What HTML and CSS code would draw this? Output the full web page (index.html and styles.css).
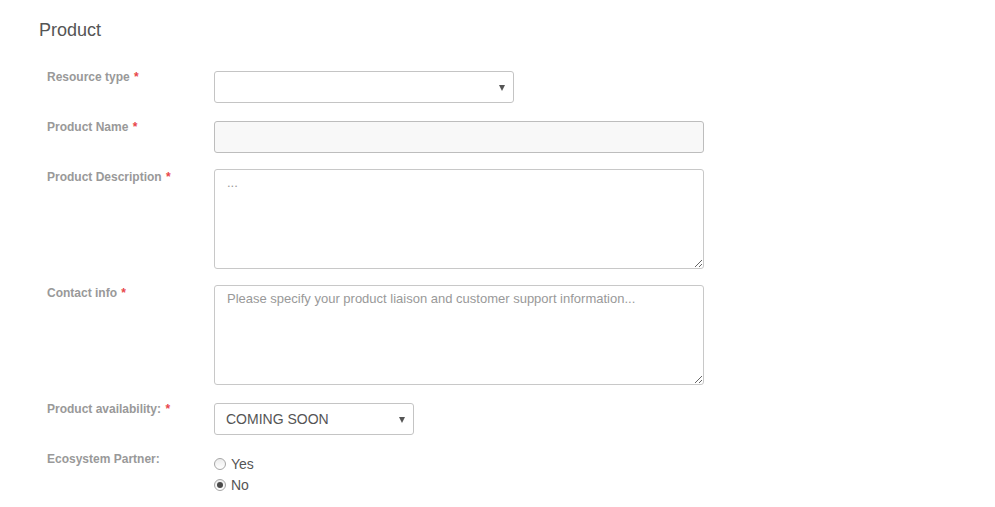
FILE: index.html
```html
<!DOCTYPE html>
<html>
<head>
<meta charset="utf-8">
<link rel="stylesheet" href="styles.css">
</head>
<body>
<div class="page">
  <h2 class="title">Product</h2>
  <form class="form">
    <div class="row row-wide">
      <label class="label">Resource type <span class="req">*</span></label>
      <div class="field">
        <div class="select select-md"><span class="select-value"></span><span class="caret"></span></div>
      </div>
    </div>
    <div class="row">
      <label class="label">Product Name <span class="req">*</span></label>
      <div class="field">
        <input class="input input-disabled" type="text">
      </div>
    </div>
    <div class="row">
      <label class="label label-low">Product Description <span class="req">*</span></label>
      <div class="field">
        <textarea class="textarea" placeholder="..."></textarea>
      </div>
    </div>
    <div class="row row-wide">
      <label class="label label-low">Contact info <span class="req">*</span></label>
      <div class="field">
        <textarea class="textarea" placeholder="Please specify your product liaison and customer support information..."></textarea>
      </div>
    </div>
    <div class="row row-wide">
      <label class="label">Product availability: <span class="req">*</span></label>
      <div class="field">
        <div class="select select-sm"><span class="select-value">COMING SOON</span><span class="caret"></span></div>
      </div>
    </div>
    <div class="row">
      <label class="label">Ecosystem Partner:</label>
      <div class="field radios">
        <label class="radio"><input type="radio" name="eco"><span>Yes</span></label>
        <label class="radio"><input type="radio" name="eco" checked><span>No</span></label>
      </div>
    </div>
  </form>
</div>
</body>
</html>
```
FILE: styles.css
```css
html, body {
  margin: 0;
  padding: 0;
  background: #fff;
  font-family: "Liberation Sans", Arial, sans-serif;
}

.page {
  padding: 19px 0 0 39px;
}

.title {
  margin: 0;
  font-size: 18px;
  line-height: 22px;
  font-weight: normal;
  color: #555;
}

.form {
  margin-top: 30px;
  padding-left: 8px;
}

.row {
  display: flex;
  align-items: flex-start;
  margin-bottom: 16px;
}

.row-wide {
  margin-bottom: 18px;
}

.label {
  width: 167px;
  flex: none;
  font-size: 12px;
  line-height: 13px;
  font-weight: bold;
  color: #999;
}

.label-low {
  padding-top: 2px;
}

.req {
  color: #e8474b;
  margin-left: 1px;
}

.field {
  flex: none;
}

.select {
  box-sizing: border-box;
  height: 32px;
  border: 1px solid #c4c4c4;
  border-radius: 3px;
  background: #fff;
  display: flex;
  align-items: center;
  justify-content: space-between;
  padding: 0 8px 0 11px;
  font-size: 14px;
  color: #555;
}

.select-md { width: 300px; }
.select-sm { width: 200px; }

.caret {
  width: 0;
  height: 0;
  border-left: 3.5px solid transparent;
  border-right: 3.5px solid transparent;
  border-top: 6px solid #555;
  margin-top: 1px;
}

.input {
  box-sizing: border-box;
  display: block;
  width: 490px;
  height: 32px;
  margin: 0;
  border: 1px solid #bdbdbd;
  border-radius: 3px;
  padding: 0 12px;
  font-family: inherit;
  font-size: 14px;
  outline: none;
}

.input-disabled {
  background: #f8f8f8;
}

.textarea {
  box-sizing: border-box;
  display: block;
  width: 490px;
  height: 100px;
  margin: 0;
  border: 1px solid #c8c8c8;
  border-radius: 3px;
  padding: 5px 12px;
  font-family: inherit;
  font-size: 13px;
  line-height: 16px;
  color: #555;
  background: #fff;
  outline: none;
}

.textarea::placeholder {
  color: #999;
}

.radios {
  display: flex;
  flex-direction: column;
}

.radio {
  display: flex;
  align-items: center;
  height: 21px;
  font-size: 14px;
  color: #555;
}

.radio input {
  appearance: none;
  -webkit-appearance: none;
  box-sizing: border-box;
  width: 12px;
  height: 12px;
  margin: 0 5px 0 0;
  border: 1px solid #a6a6a6;
  border-radius: 50%;
  background: linear-gradient(#ececec, #fff);
  position: relative;
}

.radio input:checked::after {
  content: "";
  position: absolute;
  left: 2px;
  top: 2px;
  width: 6px;
  height: 6px;
  border-radius: 50%;
  background: #4a4a4a;
}
```
